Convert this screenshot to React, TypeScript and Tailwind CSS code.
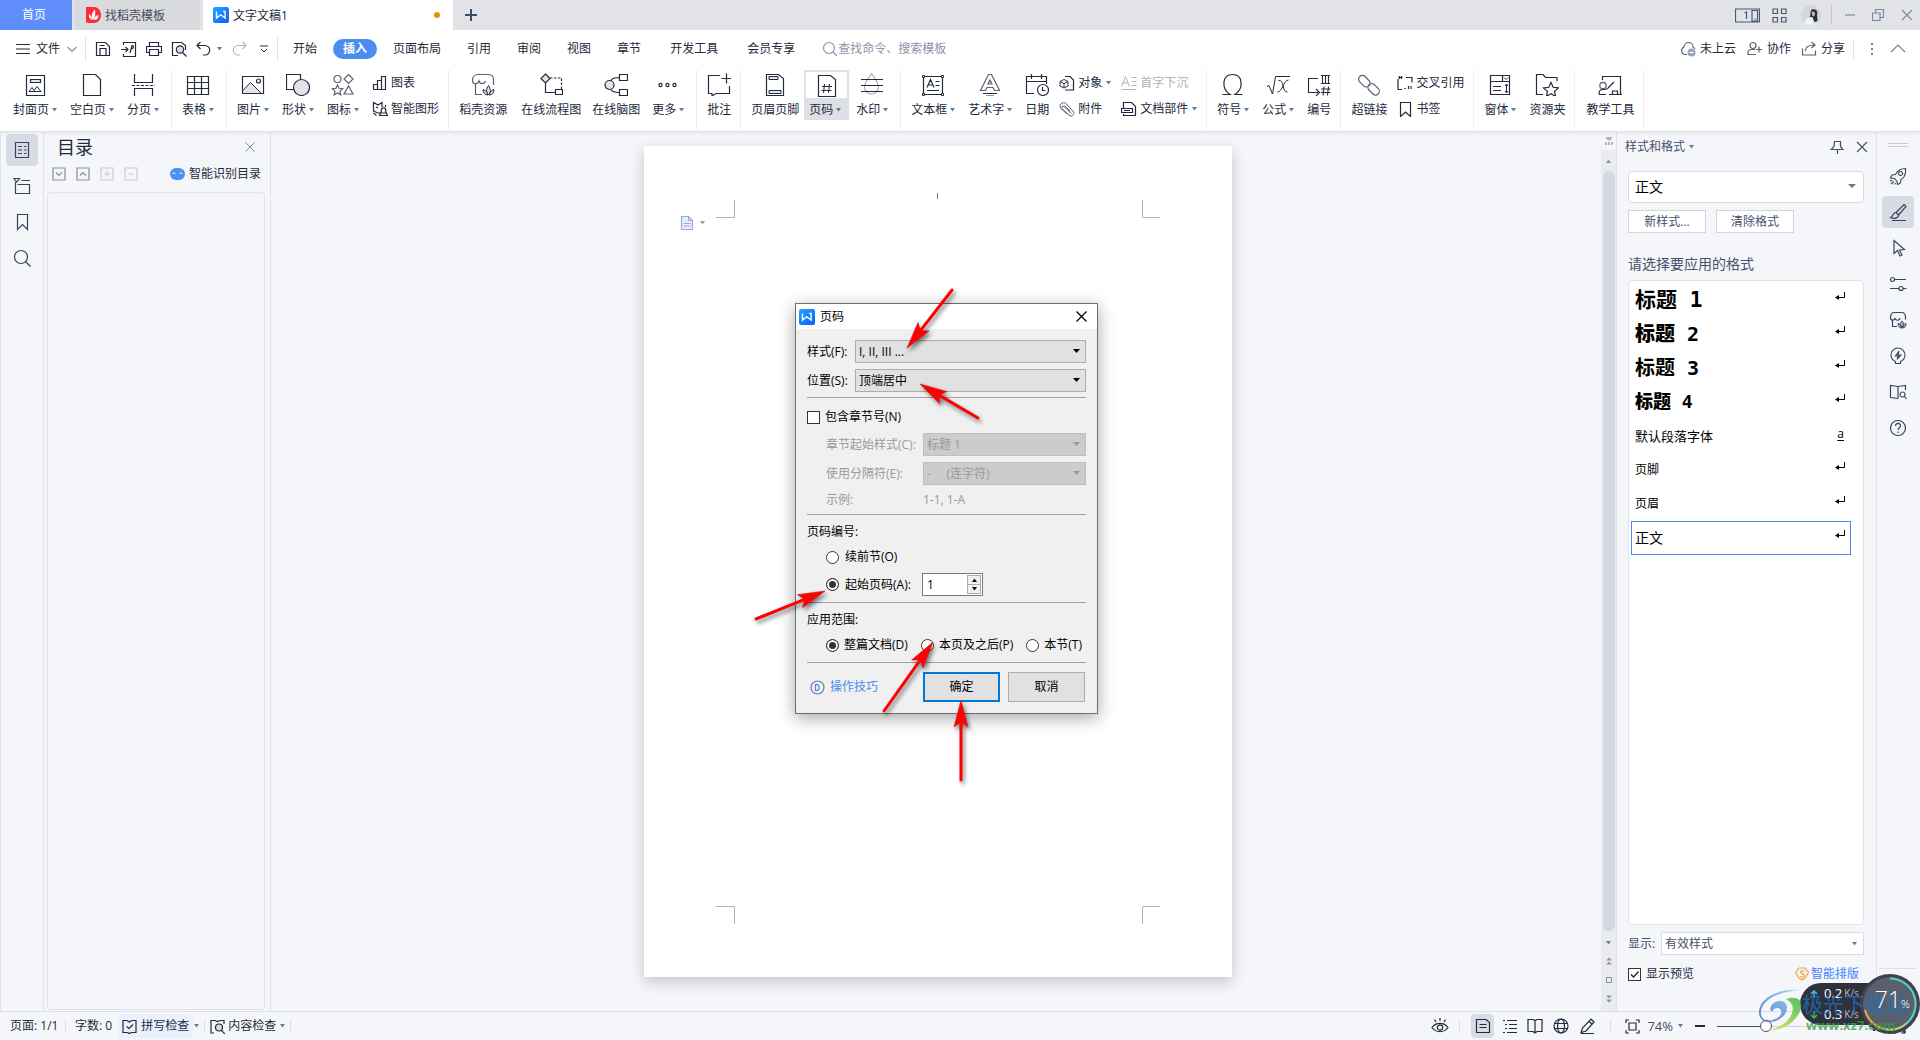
import { useState } from "react";
import type { ReactNode } from "react";

const Ic = ({ s = 24, w, children, className = "" }: { s?: number; w?: number; children: ReactNode; className?: string }) => (
  <svg width={w ?? s} height={s} viewBox={`0 0 ${w ?? s} ${s}`} fill="none" stroke="currentColor" strokeWidth="1.2" className={`shrink-0 ${className}`}>
    {children}
  </svg>
);

const Caret = ({ className = "text-[#6b7890]" }: { className?: string }) => (
  <svg width="5" height="4" viewBox="0 0 5 4" fill="currentColor" className={`shrink-0 ${className}`}>
    <path d="M0 0h5L2.5 3.5z" />
  </svg>
);

const Logo = ({ s }: { s: number }) => (
  <svg width={s} height={s} viewBox="0 0 16 16" className="shrink-0">
    <defs>
      <linearGradient id="logo" x1="0" y1="0" x2="1" y2="1">
        <stop offset="0" stopColor="#22a7ff" />
        <stop offset="1" stopColor="#0a5cff" />
      </linearGradient>
    </defs>
    <rect width="16" height="16" rx="2" fill="url(#logo)" />
    <path d="M3.5 4.5v6.6l4.3-3.3 4.3 3.3V4.5h-2" fill="none" stroke="#fff" strokeWidth="1.4" />
  </svg>
);

const leaves = (
  <g strokeWidth="1">
    <path d="M17.5 23c-2.5-2.5-2.5-6 0-9.5 2.5 3.500 2.5 7 0 9.500z" fill="#e3e4e8" />
    <path d="M17 23c-3 0-5-2-5-5.500 2 .5 4 2 5 5.500zM18 23c3 0 5-2 5-5.500-2 .5-4 2-5 5.500z" fill="#e3e4e8" />
  </g>
);

const big: Record<string, ReactNode> = {
  cover: <><path d="M3.5 3.5h18v20h-18z" /><path d="M7.5 7.5h10v3h-10z" fill="#e3e4e8" /><path d="M6 19.5l3-4 2 3 3-4 4 5z" strokeWidth="1" /></>,
  blank: <path d="M3.5 2.5h12l5 5v16h-17z" />,
  split: <><path d="M3.5 2v8.5h18V2M3.5 24v-7.5h18V24" /><path d="M1 13.5h23" strokeDasharray="3 1.5" /></>,
  table: <path d="M1.5 4.5h21v18h-21zM1.5 10.5h21M1.5 16.5h21M8.5 4.5v18M15.5 4.5v18" />,
  image: <><path d="M1.5 4.5h21v17h-21z" /><path d="M1.5 19l8-8.5 11 11h-19z" fill="#e3e4e8" strokeWidth="1" /><circle cx="17.5" cy="9" r="2" /></>,
  shape: <><path d="M.5 2.5h14v15h-14z" /><circle cx="15.5" cy="15.5" r="8" fill="#e3e4e8" /></>,
  iconset: <g stroke="#5b6172"><circle cx="6.5" cy="7" r="3.5" /><path d="M17.5 2.5l4.500 4.500-4.500 4.500L13 7zM17.5 14l4.500 8h-9zM6.5 13l1.500 3.300 3.700.4-2.700 2.400.8 3.700-3.300-1.900-3.300 1.900.8-3.700-2.700-2.400 3.700-.4z" /></g>,
  store: <><path d="M11 22.5H4.5V12M1.5 8.500c0-3.500 2-6 5.500-6h10.500c3 0 5 2 5 5.500v5M1.5 8.500c0 4 5 4.500 6.5.500 1 3.500 5.500 3.500 6.500 0" stroke="#5b6172" />{leaves}</>,
  flow: <><path d="M6.5 2l4.500 4.500-4.500 4.500L2 6.5z" fill="#e3e4e8" /><path d="M11 6h11.5v11" strokeDasharray="2.5 1.5" /><path d="M6.5 11v9.5h9.5M16.5 17.5h7v5h-7z" /></>,
  mind: <><circle cx="5.5" cy="13" r="4.5" fill="#e3e4e8" /><path d="M15.5 2.5h8v6h-8zM15.5 17.5h8v6h-8zM15 5.5c-5 0-7 1-8 3M15 20.5c-5 0-7-1-8-3" /></>,
  more: <><circle cx="4.5" cy="13" r="1.6" /><circle cx="11.5" cy="13" r="1.6" /><circle cx="18.5" cy="13" r="1.6" /></>,
  comment: <path d="M13 3.5H1.5v18H5V24l4-2.5h13.5V14M19.5 1.5v10M14.5 6.5h9.5" />,
  header: <><path d="M3.5 2.5h12l5 4v17h-17z" /><path d="M6 4.5h9v3H6zM6 18.5h12v3H6z" fill="#e3e4e8" strokeWidth="1" /></>,
  pageno: <><path d="M3.5 2.5h12l5 4v17h-17z" /><path d="M9.5 11l-1 9M14.5 11l-1 9M7 13.5h10M6.5 17.5h10" strokeWidth="1" /></>,
  water: <><path d="M11.5 1.5c4 6 7 9 7 13.5a7 7 0 0 1-14 0c0-4.5 3-7.5 7-13.5z" stroke="#a9adb8" /><path d="M1 7.5h22M1 13.5h22M1 19.5h22" /></>,
  textbox: <><path d="M2.5 4.5h19v18h-19z" /><path d="M1.5 3.5h2v2h-2zM20.5 3.5h2v2h-2zM1.5 21.5h2v2h-2zM20.5 21.5h2v2h-2z" fill="#fff" strokeWidth="1" /><path d="M6 15.5l3.5-8 3.5 8M7 13h5M14.5 9.5h4M14.5 13.5h4M6 18.5h12" /></>,
  art: <><path d="M10.5 2.5h3l8 16h-5l-1.5-3H9l-1.5 3h-5zM12 8l-2 4h4z" stroke="#5b6172" /><path d="M5 21.5h14M8 24h8" /></>,
  date: <><path d="M9 21.5H1.5v-17h20V12M1.5 9.5h20M6.5 2v5M16.5 2v5" /><circle cx="18" cy="18" r="5.5" /><path d="M17.5 15v3.5h3" /></>,
  omega: <path d="M1.5 22.5H9c-9-6-8-20 2.5-20s11.500 14 2.500 20h7.500" />,
  formula: <path d="M1 14.5l2-1 3.5 8.500 3-17.500H24M12.5 8.5c6-2 3 12 9 11.500M22.5 8c-5 0-6 12-11 12" strokeWidth="1" />,
  numbering: <path d="M11 6.5H1.5v14h10M9 17l3.5 3.5L9 24M14 3.5h9M14 11.5h9M15.5 3.5v8M18.5 3.5v8M21.5 3.5v8M17 14.5l-1 9M21.5 14.5l-1 9M14 17h9.5M14 20.5h9.5" strokeWidth="1.1" />,
  link: <g stroke="#5b6172"><rect x="1" y="5.5" width="13" height="7.5" rx="3.7" transform="rotate(45 7.5 9)" /><rect x="10" y="13.5" width="13" height="7.5" rx="3.7" transform="rotate(45 16.5 17.5)" /></g>,
  form: <><path d="M2.5 3.5h19v19h-19zM2.5 9.5h19M14.5 3.5v6" /><path d="M16 5.5l2 2 2-2M5 14.5h8M5 18.5h8M18.5 12.5v8M17 14l1.5-2 1.5 2M17 19l1.5 2 1.5-2" strokeWidth="1" /></>,
  folder: <path d="M8 22.5H1.5v-20H8l2.5 3h11.5V9M16 10.5l2.2 4.8 5.3.6-4 3.5 1.100 5-4.600-2.600-4.600 2.600 1.100-5-4-3.500 5.300-.6z" />,
  teach: <><path d="M4.5 8V4.5h18v18M11 22.5h13" /><circle cx="5" cy="13.5" r="3.2" stroke="#5b6172" /><path d="M1 22.5c0-5 2-5 4-5s3 0 5-1M1 22.5h7M10 16l6-6M14.5 22v-3h5v3" /></>,
};

const small: Record<string, ReactNode> = {
  chart: <path d="M1.5 14.5h12V1.5h-4v13M9.5 5.5h-4v9M5.5 9.5h-4v5" />,
  smart: <path d="M9 12H6l-4.5-2V1.5L6 4l4-2.5V6M4 6l2 1M1.5 12l3 2.5M13.5 4v2M11.5 7a2 2 0 0 1 2 3l2 4.5h-8l2-4.5a2 2 0 0 1 2-3zM9 12h6" />,
  object: <><path d="M6 1.5h5l3.5 3.5v10H6" /><path d="M5 4.5l4 2v4.5l-4 2-4-2V6.5zM1 6.5l4 2 4-2M5 8.5V13" fill="#fff" strokeWidth="1" /></>,
  clip: <path d="M12.5 12.5L5 5.5a1.5 1.5 0 0 0-2 2.2l7 6.5c3 2.5 6.5-1 4-4L7 2.5C3.5 0-1 4 2 7.5l6 5.5M11 10L5.5 4.800" stroke="#5b6172" strokeWidth="1" />,
  dropcap: <path d="M.5 11.5L4.5 1.5l4 10M2 8h5M10.5 2.5h5M10.5 6.5h5M10.5 10.5h5M.5 14.5h15" strokeWidth="1" />,
  parts: <><path d="M2.5 7V1.5h8l4 4v9h-12V13" /><path d="M.5 7.5h11v4H.5zM3 9.5h6" /></>,
  cross: <path d="M5.5 2.5h-4M1 4v10.5h4M9 2.5h6v5M2.5 1v3M4.5 1v3M11.5 11v3M14 11v3M7.5 13.5h1.5" />,
  bookmark: <path d="M3.5 1.5h10v14l-5-4.5-5 4.5z" />,
};

const Sep = ({ className = "h-[60px] bg-[#eceef1]" }: { className?: string }) => <span className={`w-px shrink-0 ${className}`} />;

const Tool = ({ icon, label, caret, active }: { icon: string; label: string; caret?: boolean; active?: boolean }) => (
  <button className="flex h-[50px] shrink-0 flex-col">
    <span className={`flex h-7 w-full items-center justify-center ${caret && !active ? "pr-[3px]" : ""} ${active ? "border-2 border-b-0 border-[#dde1e6]" : ""}`}>
      <Ic>{big[icon]}</Ic>
    </span>
    <span className={`flex h-[22px] w-full items-center justify-center px-[5px] pt-px ${active ? "bg-[#dde1e6]" : ""}`}>
      {label}
      {caret && <Caret className="mx-[3px] text-[#6b7890]" />}
    </span>
  </button>
);

const Mini = ({ icon, label, caret, off }: { icon: string; label: string; caret?: boolean; off?: boolean }) => (
  <button className={`flex h-[26px] items-center ${off ? "text-[#b3b3b8]" : ""}`} disabled={off}>
    <Ic s={16}>{small[icon]}</Ic>
    <span className="ml-[3px]">{label}</span>
    {caret && <Caret className="ml-1 text-[#6b7890]" />}
  </button>
);

const Group = ({ children }: { children: ReactNode }) => (
  <>
    <div className="flex pl-[5px] pr-1">{children}</div>
    <Sep />
  </>
);

const Stack = ({ children }: { children: ReactNode }) => <div className="flex shrink-0 flex-col px-[5px]">{children}</div>;

const side: Record<string, ReactNode> = {
  outline: <path d="M2.5 1.5h13v15h-13zM5 5.5h4M11 5.5h2.5M5 9h4M11 9h2.5M5 12.5h4M11 12.5h2.5" />,
  tree: <path d="M1 1.5h5.5L3.7 5zM8.5 3.5H17M2.5 5v11.5h14v-9h-12" />,
  mark: <path d="M4.5 1.5h10v15l-5-5-5 5z" />,
  find: <><circle cx="8" cy="8" r="6.5" /><path d="M12.5 12.5l5 5" /></>,
  rocket: <path d="M16.5 1.5c-5 0-8 2-10 6L3 8l-1.5 3 4 .5 2.5 3 .5 3 3-1.5.5-3.5c4-2 5-5.5 4.5-11zM1 14l2.5-1M2 17l3-2.5M5.5 17.5l1-1.5M11.5 4.5a2 2 0 1 0 .1 0" strokeWidth="1.1" />,
  pen: <path d="M15 1.5l2 2L9.5 12 7 9.5zM7 9.5C3.5 9.5 5 13 1.5 14.5c3 1.5 8 1 8-2.5M3 17.5h14" />,
  pointer: <path d="M5 1.5v13l3.5-3 2.5 5.5 2-1-2.5-5 5-.5z" />,
  sliders: <><circle cx="3.5" cy="4.5" r="2" /><path d="M5.5 4.5H17M1 13.5h9M14 13.5h3.5" /><circle cx="12" cy="13.5" r="2" /></>,
  market: <><path d="M8 15.5H3.5V9M1.5 6.500c0-3 1-5 4-5h7c3 0 4 2 4 5v2M1.5 6.500c0 3.500 4 3.500 4.500.5.500 3 4.500 3 5 0" /><path d="M13 17c-2-2-2-5 0-7 2 2 2 5 0 7zM13 17c-3 0-4-2-4-4.500 2 .5 3 2 4 4.500zM13 17c3 0 4-2 4-4.500-2 .5-3 2-4 4.500z" fill="#b9bdc9" strokeWidth="1" /></>,
  bulb: <path d="M6.5 14.5C3 13 2 10.5 2 8a7 7 0 0 1 14 0c0 2.5-1 5-4.5 6.5v2h-5zM10 4L6.5 9h3L8 12.5 12 8H9z" strokeWidth="1.1" />,
  book: <path d="M9 15.5l-7.5-1V2.5l7.5 1 7.5-1V7M9 3.5v12M13.5 9a2.5 2.5 0 1 0 .1 0M15.5 13.5l2 2.5" />,
  help: <><circle cx="9" cy="9" r="7.5" /><path d="M6.5 7c0-3.5 5-3.5 5 0 0 2-2.5 2-2.500 4M9 12.5V14" /></>,
};

const SideBtn = ({ name, active }: { name: string; active?: boolean }) => (
  <button aria-label={name} className={`mb-1 flex h-8 w-8 items-center justify-center rounded-sm ${active ? "bg-[#d7dce4]" : ""}`}>
    <Ic s={18}>{side[name]}</Ic>
  </button>
);

const TitleBar = () => (
  <div className="flex h-[30px] items-stretch bg-[#e2e3e7]">
    <button className="w-[72px] bg-[#5f8df9] pr-1 text-white">首页</button>
    <button className="ml-[3px] flex w-[125px] items-center bg-[#d8dade] pl-[11px] text-[#474c5c]">
      <svg width="15" height="16" viewBox="0 0 15 16">
        <path d="M0 0h8a7 8 0 0 1 0 16H2a2 2 0 0 1-2-2z" fill="#fb2c3c" />
        <path d="M7 13C4.5 9.5 6 5 9 2.5c.5 4 .5 8-2 10.5zM6 13C3.5 12 2.5 9.5 3 7c2 1.5 3 3.5 3 6zM8 13c.5-3 2-4.500 4.500-5 0 3-1.500 5-4.500 5z" fill="#fff" />
      </svg>
      <span className="ml-1 pt-px">找稻壳模板</span>
    </button>
    <button className="ml-[3px] flex w-[250px] items-center bg-white pl-[10px] pr-[13px]">
      <Logo s={16} />
      <span className="ml-1 flex-1 pt-px text-left">文字文稿1</span>
      <span className="h-[6px] w-[6px] rounded-full bg-[#e59400]" />
    </button>
    <button aria-label="新建" className="ml-3 text-[#3d4c6b]">
      <Ic s={12}><path d="M6 0v12M0 6h12" strokeWidth="2" /></Ic>
    </button>
    <div className="ml-auto flex items-center pr-[7px] text-[#7d89a5]">
      <button aria-label="窗口" className="text-[#4a5873]">
        <Ic s={15} w={25}><path d="M.5 1h24v13H.5zM17 2.5h5.5v10.5H17zM19.5 11h1.5M9.5 5l2-1v7" /></Ic>
      </button>
      <button aria-label="应用" className="ml-3 text-[#4a5873]">
        <Ic s={15}><path d="M1 1h4.5v4.5H1zM9.5 1H14v4.5H9.5zM1 9.5h4.5V14H1zM9.5 9.5H14V14H9.5z" /></Ic>
      </button>
      <svg width="20" height="20" viewBox="0 0 20 20" className="ml-[14px]">
        <circle cx="10" cy="10" r="10" fill="#cdd9df" />
        <path d="M11 4.500c4-1.500 6.500 2 5 5.500l.5 6-3 1-2-5-4 2c1-2 2-3 2-5 0-2 0-3.500 1.500-4.500z" fill="#2d2a33" />
        <path d="M10.500 7c2-1 3.500 0 3.500 2s-1.500 3-2.500 2z" fill="#e3a9a0" />
        <path d="M4 18c0-4 3-6 6.500-6l2.500 7c-3 1.500-7 1-9-1z" fill="#f1f6f7" />
      </svg>
      <Sep className="ml-[10px] h-5 bg-[#c5c8d0]" />
      <button aria-label="最小化" className="ml-3"><Ic s={12}><path d="M1 6h10" /></Ic></button>
      <button aria-label="还原" className="ml-4"><Ic s={12}><path d="M.5 4h7.5v7.5H.5zM3.5 4V.5h8V8.5H8" /></Ic></button>
      <button aria-label="关闭" className="ml-[17px]"><Ic s={12}><path d="M1 1l10 10M11 1L1 11" /></Ic></button>
    </div>
  </div>
);

const menus = ["页面布局", "引用", "审阅", "视图", "章节"];

const MenuBar = () => (
  <div className="flex h-[38px] items-center pr-[14px]">
    <button className="flex items-center pl-[15px]">
      <Ic s={14} w={15}><path d="M1 2.5h14M1 7h14M1 11.5h14" /></Ic>
      <span className="ml-[6px]">文件</span>
      <Ic s={10} className="ml-[7px] text-[#8a8f9c]"><path d="M.5 3l4.5 4.5L9.5 3" /></Ic>
    </button>
    <Sep className="ml-[8px] h-6 bg-[#dfe1e6]" />
    <div className="flex items-center pl-[9px]">
      <button aria-label="保存"><Ic s={16}><path d="M1.5 1.5h9l4 4v9h-13zM5 14.5v-7h6v7M4.5 4.5h5" /></Ic></button>
      <button aria-label="输出为PDF" className="ml-[10px]"><Ic s={16}><path d="M2.5 4V1.5h12v14h-12V13M0 8.5h7M4.5 6L7 8.5 4.5 11M9 12l2-7.5c2-.5 2 3.5-1 3.5" /></Ic></button>
      <button aria-label="打印" className="ml-[9px]"><Ic s={16}><path d="M3.5 5V1.5h9V5M3.5 11.5h-3v-6h15v6h-3M3.5 8.5h9v6h-9z" /></Ic></button>
      <button aria-label="打印预览" className="ml-[9px]"><Ic s={16}><path d="M7 14.5H1.5v-13h9l4 3V9" /><circle cx="9" cy="8.5" r="3.7" fill="#d9dbe2" /><path d="M11.5 11.5l4 4" /></Ic></button>
      <button aria-label="撤销" className="ml-[9px]"><Ic s={16}><path d="M4.5 1L1 4.5 4.5 8M1 4.5h8a4.5 4.5 0 0 1 0 9.500H7" /></Ic></button>
      <Caret className="ml-[5px] text-[#6b7890]" />
      <button aria-label="恢复" className="ml-[9px] text-[#b4b7bf]"><Ic s={16}><path d="M11.5 1L15 4.5 11.5 8M15 4.5H7a4.5 4.5 0 0 0 0 9.500h2" /></Ic></button>
      <button aria-label="自定义" className="ml-[12px]"><Ic s={10}><path d="M1 2h8M2 5l3 3 3-3" strokeWidth="1" /></Ic></button>
    </div>
    <Sep className="ml-[8px] h-6 bg-[#dfe1e6]" />
    <nav className="ml-[2px] flex items-center">
      <button className="px-[13px]">开始</button>
      <button className="mx-[3px] h-5 rounded-full bg-[#4a8cf0] px-[10px] font-bold text-white">插入</button>
      {menus.map((m) => <button key={m} className="px-[13px]">{m}</button>)}
      <button className="px-4">开发工具</button>
      <button className="px-[13px]">会员专享</button>
    </nav>
    <label className="ml-[14px] flex items-center text-[#8a93a8]">
      <Ic s={16}><circle cx="7" cy="7" r="5.5" /><path d="M11 11l4 4" /></Ic>
      <input aria-label="查找命令" className="w-[120px] outline-none placeholder:text-[#8a93a8]" placeholder="查找命令、搜索模板" />
    </label>
    <div className="ml-auto flex items-center">
      <button className="flex items-center gap-1">
        <Ic s={16}><path d="M7 13.5H4.5a4 4 0 0 1-.5-7.500 4.500 4.500 0 0 1 9 0c1 .5 1.500 1 2 2" stroke="#5b6172" /><circle cx="11.5" cy="11.5" r="4" fill="#9aa2b8" stroke="none" /><path d="M9.5 11.5h4" stroke="#fff" /></Ic>
        未上云
      </button>
      <button className="ml-[11px] flex items-center gap-1">
        <Ic s={16}><circle cx="6" cy="4.5" r="3" stroke="#5b6172" /><path d="M9 13.5H1v-2C1 9 3 8.5 5 8.5h3M12 5.5v6M9 8.5h6" stroke="#5b6172" /></Ic>
        协作
      </button>
      <button className="ml-[10px] flex items-center gap-1">
        <Ic s={16}><path d="M1.5 7.5v6.5h13V9.5M4.5 10c0-4 3-6 9-6M10.5 1l3.500 3-3.500 3" stroke="#5b6172" /></Ic>
        分享
      </button>
      <Sep className="ml-2 h-5 bg-[#dfe1e6]" />
      <button aria-label="更多" className="ml-4"><Ic s={14} w={4}><path d="M1 2h2M1 7h2M1 12h2" strokeWidth="2" stroke="#7b8190" /></Ic></button>
      <button aria-label="收起" className="ml-4"><Ic s={16}><path d="M1 11l7-7 7 7" stroke="#7b8190" /></Ic></button>
    </div>
  </div>
);

const Ribbon = () => (
  <div className="relative z-10 flex h-16 border-b border-[#dfe1e4] pl-[3px] pt-[2px] shadow-[0_1px_3px_rgba(0,0,0,0.08)]">
    <Group>
      <Tool icon="cover" label="封面页" caret />
      <Tool icon="blank" label="空白页" caret />
      <Tool icon="split" label="分页" caret />
    </Group>
    <Group>
      <Tool icon="table" label="表格" caret />
    </Group>
    <Group>
      <Tool icon="image" label="图片" caret />
      <Tool icon="shape" label="形状" caret />
      <Tool icon="iconset" label="图标" caret />
      <Stack>
        <Mini icon="chart" label="图表" />
        <Mini icon="smart" label="智能图形" />
      </Stack>
    </Group>
    <Group>
      <Tool icon="store" label="稻壳资源" />
      <span className="w-1" />
      <Tool icon="flow" label="在线流程图" />
      <span className="w-px" />
      <Tool icon="mind" label="在线脑图" />
      <span className="w-[2px]" />
      <Tool icon="more" label="更多" caret />
    </Group>
    <Group>
      <Tool icon="comment" label="批注" />
    </Group>
    <Group>
      <Tool icon="header" label="页眉页脚" />
      <Tool icon="pageno" label="页码" caret active />
      <span className="w-[2px]" />
      <Tool icon="water" label="水印" caret />
    </Group>
    <Group>
      <Tool icon="textbox" label="文本框" caret />
      <Tool icon="art" label="艺术字" caret />
      <Tool icon="date" label="日期" />
      <Stack>
        <Mini icon="object" label="对象" caret />
        <Mini icon="clip" label="附件" />
      </Stack>
      <Stack>
        <Mini icon="dropcap" label="首字下沉" off />
        <Mini icon="parts" label="文档部件" caret />
      </Stack>
    </Group>
    <Group>
      <Tool icon="omega" label="符号" caret />
      <Tool icon="formula" label="公式" caret />
      <Tool icon="numbering" label="编号" />
    </Group>
    <Group>
      <Tool icon="link" label="超链接" />
      <Stack>
        <Mini icon="cross" label="交叉引用" />
        <Mini icon="bookmark" label="书签" />
      </Stack>
    </Group>
    <Group>
      <Tool icon="form" label="窗体" caret />
      <Tool icon="folder" label="资源夹" />
    </Group>
    <Group>
      <span className="w-px" />
      <Tool icon="teach" label="教学工具" />
    </Group>
  </div>
);

const Toc = () => (
  <aside className="flex w-[227px] shrink-0 flex-col border-r border-[#e1e3ea] pl-[3px] pr-[5px]">
    <div className="flex h-[30px] items-center justify-between pl-[10px] pr-[10px]">
      <h2 className="text-[18px] leading-[26px]">目录</h2>
      <button aria-label="关闭目录" className="text-[#7d89a5]"><Ic s={10}><path d="M.5.5l9 9M9.5.5l-9 9" strokeWidth="1" /></Ic></button>
    </div>
    <div className="flex h-[23px] items-center gap-[10px] pl-[5px] text-[#8a8f9c]">
      <button aria-label="展开"><Ic s={14}><path d="M1 1h12v12H1zM4 5.5l3 3 3-3" /></Ic></button>
      <button aria-label="收拢"><Ic s={14}><path d="M1 1h12v12H1zM4 8.5l3-3 3 3" /></Ic></button>
      <button aria-label="增加级别" className="text-[#c9ccd3]"><Ic s={14}><path d="M1 1h12v12H1zM4 7h6M7 4v6" /></Ic></button>
      <button aria-label="降低级别" className="text-[#c9ccd3]"><Ic s={14}><path d="M1 1h12v12H1zM4 7h6" /></Ic></button>
      <button className="ml-auto flex items-center gap-1 pr-1 text-[#232a3d]">
        <svg width="15" height="12" viewBox="0 0 15 12"><rect width="15" height="12" rx="6" fill="#4a93f2" /><path d="M2.5 6l1.5-1.5L5.5 6M9.5 6L11 4.5 12.5 6" stroke="#fff" fill="none" /></svg>
        智能识别目录
      </button>
    </div>
    <div className="mb-px mt-[7px] flex-1 rounded-sm border border-[#e1e3ea]" />
  </aside>
);

type DropProps = { id: string; options: string[]; disabled?: boolean; className?: string };

const Drop = ({ id, options, disabled, className = "" }: DropProps) => (
  <span className={`relative block h-[23px] ${className}`}>
    <select id={id} disabled={disabled} className="h-full w-full appearance-none border border-[#adadad] bg-[#e1e1e1] pl-[3px] leading-[18px] text-black disabled:border-[#bfbfbf] disabled:bg-[#ccc] disabled:text-[#9a9a9a] disabled:opacity-100">
      {options.map((o) => <option key={o}>{o}</option>)}
    </select>
    <svg width="7" height="4" viewBox="0 0 7 4" className={`pointer-events-none absolute right-[6px] top-[9px] ${disabled ? "fill-[#9a9a9a]" : "fill-black"}`}><path d="M0 0h7L3.5 4z" /></svg>
  </span>
);

const Rule = ({ className = "" }: { className?: string }) => <hr className={`border-t border-[#a0a0a0] ${className}`} />;

const radio = "h-[13px] w-[13px] appearance-none rounded-full border border-[#333] bg-white checked:bg-[#333] checked:shadow-[inset_0_0_0_2px_white]";

const PageNumberDialog = () => {
  const [start, setStart] = useState("from");
  const [range, setRange] = useState("all");
  const [num, setNum] = useState("1");
  return (
    <div role="dialog" aria-label="页码" className="absolute left-[151px] top-[157px] w-[303px] border border-[#6d6d6d] bg-[#f0f0f0] text-black shadow-[0_4px_16px_rgba(0,0,0,0.35)]">
      <div className="flex h-[25px] items-center bg-white pl-[3px] pr-[10px]">
        <Logo s={16} />
        <span className="ml-[5px] flex-1">页码</span>
        <button aria-label="关闭"><Ic s={11}><path d="M.5.5l10 10M10.5.5l-10 10" /></Ic></button>
      </div>
      <div className="px-[11px] pb-[11px] pt-[11px]">
        <div className="flex items-center">
          <label htmlFor="fmt" className="w-12">样式(F):</label>
          <Drop id="fmt" options={["I, II, III ..."]} className="flex-1" />
        </div>
        <div className="mt-[6px] flex items-center">
          <label htmlFor="pos" className="w-12">位置(S):</label>
          <Drop id="pos" options={["顶端居中"]} className="flex-1" />
        </div>
        <Rule className="mt-[5px]" />
        <label className="mt-[10px] flex h-[18px] items-center gap-[5px]">
          <input type="checkbox" className="h-[13px] w-[13px] appearance-none border border-[#333] bg-white" />
          包含章节号(N)
        </label>
        <div className="mt-[7px] flex items-center pl-[19px] text-[#9a9a9a]">
          <label htmlFor="chap" className="w-[97px]">章节起始样式(C):</label>
          <Drop id="chap" options={["标题 1"]} disabled className="flex-1" />
        </div>
        <div className="mt-[6px] flex items-center pl-[19px] text-[#9a9a9a]">
          <label htmlFor="dash" className="w-[97px]">使用分隔符(E):</label>
          <Drop id="dash" options={["-\u00a0\u00a0\u00a0\u00a0\u00a0(连字符)"]} disabled className="flex-1" />
        </div>
        <div className="mt-[6px] flex h-[18px] items-center pl-[19px] text-[#9a9a9a]">
          <span className="w-[97px]">示例:</span>
          <span>1-1, 1-A</span>
        </div>
        <Rule className="mt-[5px]" />
        <p className="mt-[8px] h-[18px]">页码编号:</p>
        <label className="mt-[7px] flex h-[18px] items-center gap-[6px] pl-[19px]">
          <input type="radio" name="start" className={radio} checked={start === "prev"} onChange={() => setStart("prev")} />
          续前节(O)
        </label>
        <div className="mt-[7px] flex h-[23px] items-center pl-[19px]">
          <label className="flex w-24 items-center gap-[6px]">
            <input type="radio" name="start" className={radio} checked={start === "from"} onChange={() => setStart("from")} />
            起始页码(A):
          </label>
          <span className="flex h-[23px] w-[61px] border border-[#7a7a7a] bg-white p-px">
            <input aria-label="起始页码" className="w-full min-w-0 flex-1 pl-[3px] outline-none" value={num} onChange={(e) => setNum(e.target.value)} />
            <span className="flex flex-col">
              <button aria-label="增加" onClick={() => setNum(String(Number(num) + 1))} className="flex w-[14px] flex-1 items-center justify-center border border-[#adadad] bg-[#f0f0f0]"><Caret className="rotate-180 text-black" /></button>
              <button aria-label="减少" onClick={() => setNum(String(Number(num) - 1))} className="flex w-[14px] flex-1 items-center justify-center border border-t-0 border-[#adadad] bg-[#f0f0f0]"><Caret className="text-black" /></button>
            </span>
          </span>
        </div>
        <Rule className="mt-[6px]" />
        <p className="mt-[8px] h-[18px]">应用范围:</p>
        <div className="mt-[7px] flex h-[18px] items-center justify-between pl-[19px] pr-[4px]">
          {[["all", "整篇文档(D)"], ["after", "本页及之后(P)"], ["section", "本节(T)"]].map(([v, t]) => (
            <label key={v} className="flex items-center gap-[5px]">
              <input type="radio" name="range" className={radio} checked={range === v} onChange={() => setRange(v)} />
              {t}
            </label>
          ))}
        </div>
        <Rule className="mt-[8px]" />
        <div className="mt-[9px] flex items-center pl-[3px]">
          <a href="#tips" className="flex flex-1 items-center gap-[5px] text-[#4a8cf0]">
            <Ic s={15}><circle cx="7.5" cy="7.5" r="6.5" stroke="#6b7890" /><path d="M5.5 4.5c5-.5 5 6.5 0 6z" /></Ic>
            操作技巧
          </a>
          <button className="h-[30px] w-[77px] border-2 border-[#0078d7] bg-[#e1e1e1]">确定</button>
          <button className="ml-2 mr-px h-[30px] w-[77px] border border-[#adadad] bg-[#e1e1e1]">取消</button>
        </div>
      </div>
    </div>
  );
};

// [tail x, tail y, tip x, tip y] measured from the sheet's corner
const arrows = [
  [308, 144, 263, 202],
  [334, 272, 276, 238],
  [112, 473, 181, 445],
  [240, 565, 289, 496],
  [317, 634, 317, 554],
];

const Arrows = () => (
  <svg className="pointer-events-none absolute inset-0 h-full w-full overflow-visible drop-shadow-[2px_3px_2px_rgba(0,0,0,0.5)]">
    {arrows.map(([x1, y1, x2, y2], i) => {
      const len = Math.hypot(x2 - x1, y2 - y1);
      const deg = (Math.atan2(y2 - y1, x2 - x1) * 180) / Math.PI;
      return (
        <g key={i} transform={`translate(${x2} ${y2}) rotate(${deg})`} fill="#fe0000">
          <path d={`M${-len} 0H-20`} stroke="#fe0000" strokeWidth="3" strokeLinecap="round" />
          <path d="M0 0L-27 -7L-22 0L-27 7z" stroke="#c22" strokeWidth=".6" />
        </g>
      );
    })}
  </svg>
);

const Sheet = () => (
  <div className="relative h-[831px] w-[588px] shrink-0 bg-white shadow-[0_5px_14px_rgba(0,0,0,0.2)]">
    <svg className="absolute inset-0 h-full w-full" fill="none" stroke="#b4b4b4">
      <path d="M90.5 54v17.5H72M498.5 54v17.5H516M90.5 778v-17.5H72M498.5 778v-17.5H516" />
      <path d="M293.5 47v6" stroke="#777" />
    </svg>
    <button aria-label="页眉选项" className="absolute left-[36px] top-[70px] flex items-center gap-[6px] text-[#9aabd0]">
      <Ic s={14}><path d="M1.5.5h7l4 4v9h-11z" fill="#e6edfa" /><path d="M3.5 7.5h7M3.5 10h7M8.5.5v4h4" strokeWidth="1" /></Ic>
      <Caret className="text-[#9a9fa8]" />
    </button>
    <PageNumberDialog />
    <Arrows />
  </div>
);

const Scroll = () => (
  <div className="flex w-[15px] shrink-0 flex-col items-center bg-[#e9ebf0] pb-[6px] text-[#8a95ad]">
    <div className="flex h-[18px] w-full items-center justify-center bg-[#f5f6f9]">
      <svg width="8" height="8" viewBox="0 0 8 8" fill="#aeb6c8"><path d="M1 0h6v2L4 4 1 2zM0 5h2v3H0zM3 5h2v3H3zM6 5h2v3H6z" /></svg>
    </div>
    <div className="flex h-[21px] items-center"><Caret className="rotate-180" /></div>
    <div className="w-3 flex-1 rounded-full bg-[#d5d8e1]" />
    <div className="flex h-6 items-center"><Caret /></div>
    <svg width="6" height="8" viewBox="0 0 6 8" fill="currentColor" className="mt-[2px]"><path d="M0 3.5h6L3 .5zM0 7.5h6L3 4.5z" /></svg>
    <span className="mt-[12px] h-[6px] w-[6px] border border-[#8a95ad]" />
    <svg width="6" height="8" viewBox="0 0 6 8" fill="currentColor" className="mb-[2px] mt-[12px]"><path d="M0 .5h6L3 3.5zM0 4.5h6L3 7.5z" /></svg>
  </div>
);

const styles = [
  { name: "标题 1", cls: "font-['DejaVu_Sans_Mono','Noto_Sans_CJK_SC',monospace] text-[21px] font-bold" },
  { name: "标题 2", cls: "font-['DejaVu_Sans_Mono','Noto_Sans_CJK_SC',monospace] text-[20px] font-black" },
  { name: "标题 3", cls: "font-['DejaVu_Sans_Mono','Noto_Sans_CJK_SC',monospace] text-[20px] font-bold" },
  { name: "标题 4", cls: "font-['DejaVu_Sans_Mono','Noto_Sans_CJK_SC',monospace] text-[18px] font-black" },
  { name: "默认段落字体", cls: "text-[13px]" },
  { name: "页脚", cls: "" },
  { name: "页眉", cls: "" },
  { name: "正文", cls: "text-[14px]" },
];

const StylePane = () => {
  const [current, setCurrent] = useState("正文");
  return (
    <aside className="flex w-[261px] shrink-0 flex-col border-x border-[#e1e3ea] pb-[28px] pl-[11px] pr-[12px] text-[#474f6b]">
      <div className="-ml-[3px] -mr-1 flex h-[30px] items-center">
        <button className="flex items-center gap-1">样式和格式<Caret /></button>
        <button aria-label="固定" className="ml-auto"><Ic s={14}><path d="M4.5 1.5h6v5l2.5 3H1l3-3zM7.5 9.5V14" /></Ic></button>
        <button aria-label="关闭" className="ml-[12px]"><Ic s={12}><path d="M1 1l10 10M11 1L1 11" /></Ic></button>
      </div>
      <span className="relative mt-[9px] block h-8">
        <select aria-label="当前样式" className="h-full w-full appearance-none rounded-sm border border-[#d8dbe2] bg-white pl-[6px] text-[14px] text-black">
          <option>正文</option>
        </select>
        <svg width="8" height="4" viewBox="0 0 8 4" className="pointer-events-none absolute right-2 top-[13px] fill-[#6b7890]"><path d="M0 0h8L4 4z" /></svg>
      </span>
      <div className="mt-[7px] flex gap-[10px]">
        <button className="h-[23px] w-[78px] border border-[#d0d4dd] bg-white">新样式...</button>
        <button className="h-[23px] w-[78px] border border-[#d0d4dd] bg-white">清除格式</button>
      </div>
      <p className="mt-5 h-[22px] text-[14px] leading-[22px]">请选择要应用的格式</p>
      <ul className="mt-[5px] flex-1 rounded-sm border border-[#e1e3ea] bg-white py-[2px] pl-[2px] pr-3 text-black">
        {styles.map((s) => (
          <li key={s.name}>
            <button onClick={() => setCurrent(s.name)} className={`flex h-[34px] w-full items-center justify-between border pl-[3px] pr-[5px] ${current === s.name ? "border-[#4a8cf0]" : "border-transparent"}`}>
              <span className={s.cls}>{s.name}</span>
              {s.name === "默认段落字体" ? (
                <span className="mb-1 pr-px underline underline-offset-2">a</span>
              ) : (
                <svg width="10" height="9" viewBox="0 0 10 9" className="mb-[8px]"><path d="M9.5 0v5.5H3" fill="none" stroke="#000" /><path d="M0 5.5L4 3v5z" /></svg>
              )}
            </button>
          </li>
        ))}
      </ul>
      <div className="mt-[7px] flex h-[23px] items-center">
        <label htmlFor="show" className="w-[33px]">显示:</label>
        <span className="relative block h-full flex-1">
          <select id="show" className="h-full w-full appearance-none border border-[#d8dbe2] bg-white pl-[3px]">
            <option>有效样式</option>
          </select>
          <Caret className="pointer-events-none absolute right-[7px] top-[10px] text-[#6b7890]" />
        </span>
      </div>
      <div className="mt-[10px] flex h-[18px] items-center justify-between">
        <label className="relative flex items-center gap-[5px] text-[#232a3d]">
          <input type="checkbox" defaultChecked className="h-[13px] w-[13px] appearance-none border border-[#333] bg-white" />
          <svg width="13" height="13" viewBox="0 0 13 13" className="pointer-events-none absolute left-0" fill="none" stroke="#222"><path d="M3 6.5l2.5 2.5L10.5 3.5" strokeWidth="1.3" /></svg>
          显示预览
        </label>
        <a href="#layout" className="flex items-center gap-[2px] pr-[5px] text-[#417ff9]">
          <Ic s={14} className="text-[#f2a33a]"><path d="M4 1h6l3.5 4.5L10 11l-3 2-3-2L.5 5.5zM9.5 4.5c-2-1.5-5 0-3.5 1.500s4 1 3 3-3 1-4 .5" /></Ic>
          智能排版
        </a>
      </div>
    </aside>
  );
};

const StatusBar = () => (
  <footer className="flex h-[29px] items-center border-t border-[#dcdfe6] bg-[#f5f6f9] pl-[10px] pr-[14px]">
    <span className="w-[55px]">页面: 1/1</span>
    <Sep className="h-[14px] bg-[#dcdfe6]" />
    <span className="ml-[9px]">字数: 0</span>
    <button className="ml-[6px] flex h-6 items-center gap-1 rounded-sm bg-[#e9f1fc] px-1">
      <Ic s={15}><path d="M5 1.5H1v12h5M10 1.5h4v12H9M5 1.5l2.5 1.5L10 1.5M6 13.5L7.5 15 9 13.5M4.5 7.5L7 9.5l4-4" /></Ic>
      拼写检查
    </button>
    <Caret className="ml-px text-[#6b7890]" />
    <Sep className="mx-[5px] h-[14px] bg-[#dcdfe6]" />
    <button className="flex items-center gap-[3px]">
      <Ic s={15}><path d="M4 14H1V1.5h4l2.5 1 2.5-1h4V5" /><circle cx="9" cy="8.5" r="3.5" fill="#d9dbe2" /><path d="M11.5 11.5L15 15" /></Ic>
      内容检查
      <Caret className="ml-px text-[#6b7890]" />
    </button>
    <Sep className="mx-[5px] h-[14px] bg-[#dcdfe6]" />
    <div className="ml-auto flex items-center">
      <button aria-label="护眼模式"><Ic s={18}><path d="M1 10.5c4-5.5 12-5.5 16 0-4 5.5-12 5.5-16 0zM9 1v3M3.5 2.5L5 5M14.5 2.5L13 5" /><circle cx="9" cy="10.5" r="2.7" /></Ic></button>
      <Sep className="ml-[10px] h-[14px] bg-[#dcdfe6]" />
      <button aria-label="页面视图" className="ml-[11px] flex h-6 w-[23px] items-center justify-center rounded-sm bg-[#d7dce4]"><Ic s={16}><path d="M1.5 1.5h9.5l3.5 3v10h-13zM4.5 6.5h7M4.5 9.5h7" /></Ic></button>
      <button aria-label="大纲" className="ml-[8px]"><Ic s={16}><path d="M1 2.5h2M5 2.5h10M3 6.5h2M7 6.5h8M3 10.5h2M7 10.5h8M1 14.5h2M5 14.5h10" /></Ic></button>
      <button aria-label="阅读版式" className="ml-[9px]"><Ic s={16}><path d="M8 2.5v12M1 1.5h5l2 1 2-1h5v12h-5l-2 1.5-2-1.5H1z" /></Ic></button>
      <button aria-label="网页版式" className="ml-[10px]"><Ic s={16}><circle cx="8" cy="8" r="7" /><ellipse cx="8" cy="8" rx="3.5" ry="7" /><path d="M1.5 5.5h13M1.5 10.5h13" /></Ic></button>
      <button aria-label="写作模式" className="ml-[10px]"><Ic s={16}><path d="M12 1l3 3-8 9-5 1.5 1.5-4.500zM10 3.5L13 6M2 15.5h13" /></Ic></button>
      <Sep className="ml-[15px] h-[14px] bg-[#dcdfe6]" />
      <button aria-label="适合页面" className="ml-[14px]"><Ic s={15}><path d="M1 4V1h3M11 1h3v3M14 11v3h-3M4 14H1v-3M4 4h7v7H4z" /></Ic></button>
      <button className="ml-[7px] flex items-center gap-[5px] text-[13px] text-[#474f6b]">74%<Caret /></button>
      <button aria-label="缩小" className="ml-3"><Ic s={10}><path d="M0 5h10" strokeWidth="2" /></Ic></button>
      <input
        type="range"
        aria-label="缩放"
        defaultValue={31}
        className="ml-3 h-3 w-[150px] appearance-none bg-[linear-gradient(90deg,#49526b_33%,#cfd3dc_33%)] bg-[length:100%_1px] bg-center bg-no-repeat [&::-webkit-slider-thumb]:h-3 [&::-webkit-slider-thumb]:w-3 [&::-webkit-slider-thumb]:appearance-none [&::-webkit-slider-thumb]:rounded-full [&::-webkit-slider-thumb]:border [&::-webkit-slider-thumb]:border-[#49526b] [&::-webkit-slider-thumb]:bg-white"
      />
      <button aria-label="放大" className="ml-[2px]"><Ic s={10}><path d="M0 5h10M5 0v10" strokeWidth="2" /></Ic></button>
      <button aria-label="全屏" className="ml-3"><Ic s={15}><path d="M1 5V1h4M10 1h4v4M14 10v4h-4M5 14H1v-4M1 1l4 4M14 1l-4 4M14 14l-4-4M1 14l4-4" /></Ic></button>
    </div>
  </footer>
);

const NetMonitor = () => (
  <div className="pointer-events-none absolute bottom-0 right-0 z-20 h-[66px] w-[162px]">
    <div className="absolute bottom-[15px] right-[36px] flex h-[42px] w-[84px] flex-col justify-between rounded-l-full bg-[#2f323d] pl-[10px] text-[13px] leading-[21px] text-white">
      <span className="flex items-center gap-[6px]"><Ic s={8} className="text-[#4ab4f5]"><path d="M4 8V1M1 4l3-3 3 3" strokeWidth="1.5" /></Ic>0.2<small className="-ml-1 text-[10px] text-[#b9bbc2]">K/s</small></span>
      <span className="flex items-center gap-[6px]"><Ic s={8} className="text-[#3dbb4a]"><path d="M4 0v7M1 4l3 3 3-3" strokeWidth="1.5" /></Ic>0.3<small className="-ml-1 text-[10px] text-[#b9bbc2]">K/s</small></span>
    </div>
    <svg width="60" height="60" viewBox="0 0 60 60" className="absolute bottom-[6px] right-0">
      <circle cx="30" cy="30" r="30" fill="#3f424e" />
      <circle cx="30" cy="30" r="27" fill="#5a5f6e" />
      <path d="M30 4.5a25.5 25.5 0 0 1 17 44.5" fill="none" stroke="#4fd6c4" strokeWidth="2" />
      <path d="M47 49a25.5 25.5 0 0 1-24 5.5" fill="none" stroke="#b5d86a" strokeWidth="2" />
      <path d="M23 54.5A25.5 25.5 0 0 1 5 36" fill="none" stroke="#f0a73c" strokeWidth="2" />
    </svg>
    <svg width="46" height="44" viewBox="0 0 46 44" className="absolute bottom-[7px] left-0">
      <defs>
        <linearGradient id="swirl" x1="1" y1="0" x2="0" y2="1"><stop offset="0" stopColor="#8fd0f2" /><stop offset="1" stopColor="#3f6fc4" /></linearGradient>
        <linearGradient id="leaf" x1="1" y1="0" x2="0" y2="1"><stop offset="0" stopColor="#36b34a" /><stop offset="1" stopColor="#e5ea4b" /></linearGradient>
      </defs>
      <path d="M43 1C22 2 3 10 3 24c0 8 8 9 14 6 6-2 8-8 5-10-2-2-7-1-8 3-5-4 2-12 9-11 8 1 8 12 0 17C14 36 0 34 1 22 2 9 20-1 43 1z" fill="url(#swirl)" opacity=".85" />
      <path d="M28 10c12-4 18 2 14 12C37 34 24 42 11 41c10-2 20-8 23-17 2-6 0-11-6-14z" fill="url(#leaf)" opacity=".85" />
    </svg>
    <span className="absolute bottom-[22px] left-[44px] whitespace-nowrap text-[21px] leading-7 text-[#1e6fb8]/80">极光下载站</span>
    <span className="absolute bottom-[7px] left-[48px] text-[13px] font-bold leading-4 text-[#35a045]/80">www.xz7.com</span>
    <span className="absolute bottom-[22px] right-[10px] flex items-baseline font-['Open_Sans',sans-serif] text-[23px] font-light leading-7 text-white">71<small className="text-[11px]">%</small></span>
  </div>
);

export default function App() {
  return (
    <div className="relative flex min-h-screen flex-col overflow-hidden bg-white font-['Open_Sans','Noto_Sans_CJK_SC',sans-serif] text-[12px] leading-[18px] text-[#232a3d]">
      <TitleBar />
      <MenuBar />
      <Ribbon />
      <main className="flex flex-1 bg-[#f5f6f9]">
        <div className="flex w-11 shrink-0 flex-col items-center border-x border-[#e1e3ea] pt-[2px] text-[#39435c]">
          <SideBtn name="outline" active />
          <SideBtn name="tree" />
          <SideBtn name="mark" />
          <SideBtn name="find" />
        </div>
        <Toc />
        <section className="flex min-w-0 flex-1 items-start justify-center pl-1 pt-[14px]">
          <Sheet />
        </section>
        <Scroll />
        <StylePane />
        <div className="flex w-[43px] shrink-0 flex-col items-center pr-[2px] text-[#39435c]">
          <div className="mb-[13px] mt-[11px] h-1 w-5 border-y border-[#c9ccd5]" />
          <SideBtn name="rocket" />
          <SideBtn name="pen" active />
          <SideBtn name="pointer" />
          <SideBtn name="sliders" />
          <SideBtn name="market" />
          <SideBtn name="bulb" />
          <SideBtn name="book" />
          <SideBtn name="help" />
          <div className="mb-[42px] mt-auto h-px w-[38px] bg-[#dcdfe6]" />
        </div>
      </main>
      <StatusBar />
      <NetMonitor />
    </div>
  );
}
